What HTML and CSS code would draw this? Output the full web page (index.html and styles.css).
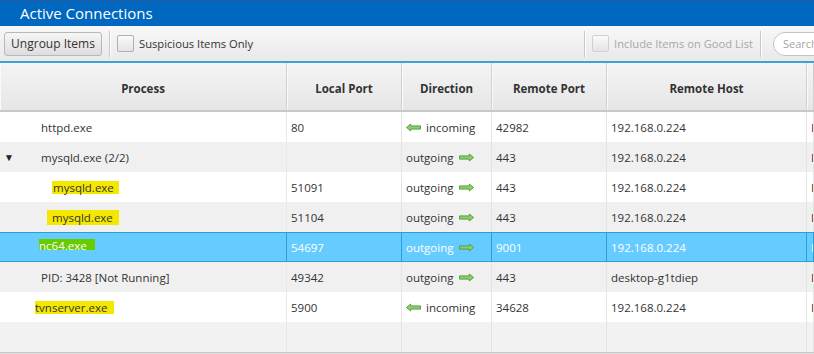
FILE: index.html
```html
<!DOCTYPE html>
<html lang="en">
<head>
    <meta charset="UTF-8">
    <title>Active Connections</title>
    <link rel="stylesheet" href="styles.css">
</head>
<body>

<!-- Title bar -->
<div class="title-bar">Active Connections</div>

<!-- Toolbar -->
<div class="toolbar">
    <button class="tool-btn">Ungroup Items</button>
    <span class="sep"></span>
    <label class="check"><span class="box"></span>Suspicious Items Only</label>
    <span class="spacer"></span>
    <span class="sep"></span>
    <label class="check disabled"><span class="box"></span>Include Items on Good List</label>
    <span class="sep"></span>
    <div class="search">Search</div>
</div>

<!-- Table -->
<div class="table">
    <div class="row head">
        <div class="cell">Process</div>
        <div class="cell">Local Port</div>
        <div class="cell">Direction</div>
        <div class="cell">Remote Port</div>
        <div class="cell">Remote Host</div>
        <div class="cell"></div>
    </div>

    <div class="row">
        <div class="cell proc">httpd.exe</div>
        <div class="cell">80</div>
        <div class="cell"><svg class="arrow in" viewBox="0 0 16 9"><path d="M0.5 4.5 L5 0.8 L5 2.8 L15.5 2.8 L15.5 6.2 L5 6.2 L5 8.2 Z"/></svg>incoming</div>
        <div class="cell">42982</div>
        <div class="cell">192.168.0.224</div>
        <div class="cell">L</div>
    </div>

    <div class="row alt">
        <div class="cell proc"><span class="toggle">&#9660;</span>mysqld.exe (2/2)</div>
        <div class="cell"></div>
        <div class="cell">outgoing<svg class="arrow out" viewBox="0 0 16 9"><path d="M15.5 4.5 L11 0.8 L11 2.8 L0.5 2.8 L0.5 6.2 L11 6.2 L11 8.2 Z"/></svg></div>
        <div class="cell">443</div>
        <div class="cell">192.168.0.224</div>
        <div class="cell">L</div>
    </div>

    <div class="row">
        <div class="cell proc child"><span class="mark m1">mysqld.exe</span></div>
        <div class="cell">51091</div>
        <div class="cell">outgoing<svg class="arrow out" viewBox="0 0 16 9"><path d="M15.5 4.5 L11 0.8 L11 2.8 L0.5 2.8 L0.5 6.2 L11 6.2 L11 8.2 Z"/></svg></div>
        <div class="cell">443</div>
        <div class="cell">192.168.0.224</div>
        <div class="cell">L</div>
    </div>

    <div class="row alt">
        <div class="cell proc child"><span class="mark m2">mysqld.exe</span></div>
        <div class="cell">51104</div>
        <div class="cell">outgoing<svg class="arrow out" viewBox="0 0 16 9"><path d="M15.5 4.5 L11 0.8 L11 2.8 L0.5 2.8 L0.5 6.2 L11 6.2 L11 8.2 Z"/></svg></div>
        <div class="cell">443</div>
        <div class="cell">192.168.0.224</div>
        <div class="cell">L</div>
    </div>

    <div class="row selected">
        <div class="cell proc"><span class="mark green">nc64.exe</span></div>
        <div class="cell">54697</div>
        <div class="cell">outgoing<svg class="arrow out" viewBox="0 0 16 9"><path d="M15.5 4.5 L11 0.8 L11 2.8 L0.5 2.8 L0.5 6.2 L11 6.2 L11 8.2 Z"/></svg></div>
        <div class="cell">9001</div>
        <div class="cell">192.168.0.224</div>
        <div class="cell">L</div>
    </div>

    <div class="row alt">
        <div class="cell proc">PID: 3428 [Not Running]</div>
        <div class="cell">49342</div>
        <div class="cell">outgoing<svg class="arrow out" viewBox="0 0 16 9"><path d="M15.5 4.5 L11 0.8 L11 2.8 L0.5 2.8 L0.5 6.2 L11 6.2 L11 8.2 Z"/></svg></div>
        <div class="cell">443</div>
        <div class="cell">desktop-g1tdiep</div>
        <div class="cell">L</div>
    </div>

    <div class="row">
        <div class="cell proc shift"><span class="mark m3">tvnserver.exe</span></div>
        <div class="cell">5900</div>
        <div class="cell"><svg class="arrow in" viewBox="0 0 16 9"><path d="M0.5 4.5 L5 0.8 L5 2.8 L15.5 2.8 L15.5 6.2 L5 6.2 L5 8.2 Z"/></svg>incoming</div>
        <div class="cell">34628</div>
        <div class="cell">192.168.0.224</div>
        <div class="cell">L</div>
    </div>

    <div class="row alt empty">
        <div class="cell"></div>
        <div class="cell"></div>
        <div class="cell"></div>
        <div class="cell"></div>
        <div class="cell"></div>
        <div class="cell"></div>
    </div>
</div>

<div class="hscroll"></div>

</body>
</html>
```

FILE: styles.css
```css
body {
    margin: 0;
    width: 814px;
    height: 354px;
    overflow: hidden;
    font-family: "Open Sans", "Noto Sans", sans-serif;
    font-size: 11.5px;
    color: #333;
    background: #f2f2f2;
}

.title-bar {
    height: 26px;
    box-sizing: border-box;
    border-top: 1px solid #2a5a9e;
    background-color: #0068c0;
    color: #fff;
    font-size: 15px;
    line-height: 24px;
    padding-left: 20px;
}

.toolbar {
    height: 37px;
    box-sizing: border-box;
    display: flex;
    align-items: center;
    padding-left: 4px;
    background: linear-gradient(#f8f8f8, #e9e9e9);
    border-bottom: 2px solid #3ca3d4;
    white-space: nowrap;
    overflow: hidden;
}
.tool-btn {
    font-family: inherit;
    font-size: 12px;
    color: #333;
    width: 98px;
    height: 24px;
    padding: 0;
    border: 1px solid #b8b8b8;
    border-radius: 3px;
    background: linear-gradient(#f6f6f6, #dddddd);
}
.sep {
    width: 1px;
    height: 26px;
    background: #c8c8c8;
    box-shadow: 1px 0 0 #fff;
    margin: 0 7px;
}
.check {
    display: flex;
    align-items: center;
    font-size: 11.2px;
    color: #333;
}
.check .box {
    width: 15px;
    height: 15px;
    border: 1px solid #b0b0b0;
    border-radius: 2px;
    background: linear-gradient(#fafafa, #e4e4e4);
    margin-right: 5px;
}
.check.disabled {
    color: #a8a8a8;
}
.check.disabled .box {
    border-color: #d0d0d0;
}
.spacer {
    flex: 1;
}
.search {
    flex: none;
    width: 60px;
    height: 24px;
    box-sizing: border-box;
    margin-left: 5px;
    margin-right: -19px;
    border: 1px solid #c4c4c4;
    border-radius: 12px 0 0 12px;
    background: #fff;
    color: #a6a6a6;
    font-size: 11px;
    line-height: 22px;
    padding-left: 9px;
}

.table {
    background: #f2f2f2;
}
.row {
    display: grid;
    grid-template-columns: 287px 115px 90px 115px 200px 1fr;
    height: 30px;
    background: #fff;
}
.row.alt {
    background: #f0f0f0;
}
.row .cell {
    display: flex;
    align-items: center;
    padding-left: 4px;
    border-right: 1px solid #e4e4e4;
    white-space: nowrap;
    overflow: hidden;
}
.row .cell:first-child {
    border-right-color: #e8e8e8;
}
.row.head {
    height: 49px;
    background: linear-gradient(#f4f4f4, #e6e6e6);
    border-bottom: 2px solid #c8c8c8;
    box-sizing: border-box;
    font-weight: bold;
    color: #333;
}
.row.head .cell {
    justify-content: center;
    padding-left: 0;
    padding-top: 3px;
    border-right: 1px solid #d0d0d0;
    box-shadow: inset 1px 0 0 #fafafa;
}
.row.selected {
    background: #66ccff;
    color: #fff;
    border-top: 1px solid #2a9fd6;
    border-bottom: 1px solid #2a9fd6;
    height: 28px;
}
.row.selected .cell {
    border-right-color: #2a9fd6;
}
.row.empty {
    background: #f2f2f2;
}

.cell.proc {
    padding-left: 41px;
    position: relative;
}
.cell.proc.child {
    padding-left: 47px;
}
.cell.proc.shift {
    padding-left: 35px;
}
.toggle {
    position: absolute;
    left: 4px;
    font-size: 10px;
    color: #222;
}

.mark {
    background: #f5e800;
    line-height: 13px;
    padding: 0 3px 0 2px;
}
.mark.m1 {
    margin-left: 5px;
    padding: 0 5px 0 1px;
}
.mark.m2 {
    padding: 1px 6px 1px 5px;
}
.mark.m3 {
    padding: 0 7px 0 0;
}
.mark.green {
    background: linear-gradient(#66cc00, #66cc00) no-repeat;
    background-size: 100% 11px;
    background-position: 0 0;
    padding: 0 8px 2px 0;
    margin-left: -2px;
    position: relative;
    top: -1px;
}

.arrow {
    flex: none;
    width: 15px;
    height: 9px;
}
.arrow.in {
    margin-right: 5px;
}
.arrow.out {
    margin-left: 6px;
}
.arrow path {
    fill: #8cd06a;
    stroke: #4e9c3c;
    stroke-width: 1;
}

.hscroll {
    height: 3px;
    border-top: 1px solid #c6c6c6;
    background: #e2e2e2;
}
```
